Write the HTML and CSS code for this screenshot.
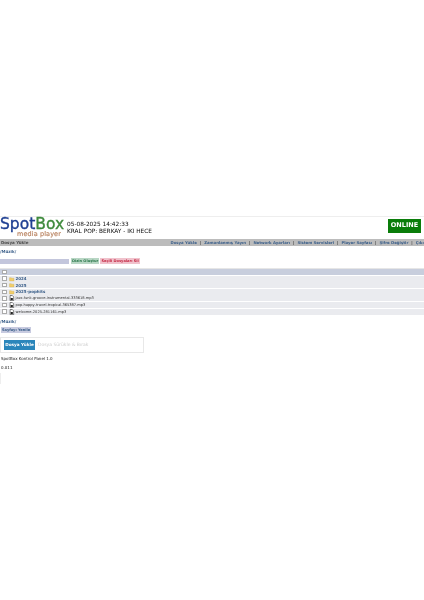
FILE: index.html
```html
<!DOCTYPE html>
<html lang="tr">
<head>
<meta charset="utf-8">
<title>SpotBox</title>
<link rel="stylesheet" href="styles.css">
</head>
<body>
<div class="page">
  <header class="head">
    <div class="logo">
      <div class="logo-main"><span class="spot">Spot</span><span class="box">Box</span></div>
      <div class="logo-sub">media player</div>
    </div>
    <div class="now">
      <div>05-08-2025 14:42:33</div>
      <div>KRAL POP: BERKAY - IKI HECE</div>
    </div>
    <div class="status">ONLINE</div>
  </header>
  <nav class="nav">
    <span class="nav-title">Dosya Yükle</span>
    <div class="nav-links">
      <a>Dosya Yükle</a><i>|</i><a>Zamanlanmış Yayın</a><i>|</i><a>Network Ayarları</a><i>|</i><a>Sistem Servisleri</a><i>|</i><a>Player Sayfası</a><i>|</i><a>Şifre Değiştir</a><i>|</i><a>Çıkış</a>
    </div>
  </nav>
  <div class="path first">/Müzik/</div>
  <div class="actions">
    <div class="search"></div>
    <button class="btn green">Dizin Oluştur</button>
    <button class="btn red">Seçili Dosyaları Sil</button>
  </div>
  <div class="list">
    <div class="row header"><span class="check"></span></div>
    <div class="row"><span class="check"></span><svg class="ico" viewBox="0 0 10 10"><path d="M1 2.5h3l1 1h4v5H1z" fill="#f2cf6b" stroke="#c9a648" stroke-width=".6"/></svg><b>2024</b></div>
    <div class="row"><span class="check"></span><svg class="ico" viewBox="0 0 10 10"><path d="M1 2.5h3l1 1h4v5H1z" fill="#f2cf6b" stroke="#c9a648" stroke-width=".6"/></svg><b>2025</b></div>
    <div class="row"><span class="check"></span><svg class="ico" viewBox="0 0 10 10"><path d="M1 2.5h3l1 1h4v5H1z" fill="#f2cf6b" stroke="#c9a648" stroke-width=".6"/></svg><b>2025-pophits</b></div>
    <div class="row"><span class="check"></span><svg class="ico" viewBox="0 0 10 10"><path d="M2 .5h4l2.5 2.5v7H2z" fill="#fff" stroke="#222"/><path d="M3 5h4v4H3z" fill="#222"/></svg><span>jazz-funk-groove-instrumental-333618.mp3</span></div>
    <div class="row"><span class="check"></span><svg class="ico" viewBox="0 0 10 10"><path d="M2 .5h4l2.5 2.5v7H2z" fill="#fff" stroke="#222"/><path d="M3 5h4v4H3z" fill="#222"/></svg><span>pop-happy-travel-tropical-365387.mp3</span></div>
    <div class="row"><span class="check"></span><svg class="ico" viewBox="0 0 10 10"><path d="M2 .5h4l2.5 2.5v7H2z" fill="#fff" stroke="#222"/><path d="M3 5h4v4H3z" fill="#222"/></svg><span>welcome-2025-281161.mp3</span></div>
  </div>
  <div class="path second">/Müzik/</div>
  <button class="btn reset">Sayfayı Yenile</button>
  <div class="upload">
    <button class="upload-btn">Dosya Yükle</button>
    <span class="upload-hint">Dosya Sürükle &amp; Bırak</span>
  </div>
  <div class="meta title">SpotBox Kontrol Panel 1.0</div>
  <div class="meta version">0.011</div>
  <div class="rule"></div>
</div>
</body>
</html>
```
FILE: styles.css
```css
html, body { margin: 0; padding: 0; background: #fff; overflow: hidden; }
.page { width: 424px; padding-top: 216px; font-family: "DejaVu Sans", Verdana, sans-serif; font-size: 4px; color: #333; overflow: hidden; will-change: transform; }
.head { display: flex; align-items: flex-start; height: 21px; border-top: 1px solid #eee; padding-bottom: 1px; }
.logo { width: 66px; flex: none; }
.logo-main { font-size: 15.5px; line-height: 14px; white-space: nowrap; -webkit-text-stroke: .35px; }
.spot { color: #1f3f92; }
.box { color: #3e8a3c; }
.logo-sub { font-size: 6.5px; line-height: 7px; letter-spacing: .1px; color: #b9825f; padding-left: 17px; white-space: nowrap; -webkit-text-stroke: .15px; }
.now { margin-left: 1px; padding-top: 4px; font-size: 5.8px; line-height: 6.5px; color: #111; white-space: nowrap; }
.status { margin-left: auto; margin-right: 3px; margin-top: 2px; width: 33px; height: 14px; background: #0a7d0a; color: #fff; font-weight: bold; font-size: 6.5px; line-height: 13px; text-align: center; }
.nav { display: flex; justify-content: space-between; height: 7px; line-height: 7px; background: #bcbcbc; white-space: nowrap; font-weight: bold; padding-left: 1px; }
.nav-title { color: #4c4c4c; }
.nav-links { display: flex; flex: none; gap: 3px; margin-right: -2px; color: #3b5f8a; font-size: 3.85px; }
.nav-links i { font-style: normal; color: #333; }
.path { font-size: 4px; font-weight: bold; color: #3b5f8a; line-height: 6px; }
.first { margin-top: 3px; }
.actions { display: flex; align-items: center; gap: 1px; margin-top: 3px; height: 6px; }
.search { width: 69px; height: 5px; margin-right: 1px; background: #c3c6dc; }
.btn { border: 0; padding: 0 1px; margin: 0; height: 6px; font: bold 3.6px/6px "DejaVu Sans", sans-serif; white-space: nowrap; }
.green { background: #b8d6c4; color: #2f7a4f; }
.red { background: #f0c2cc; color: #c52a45; }
.list { margin-top: 4px; border-top: 1px solid #e6e6e6; }
.row { display: flex; align-items: center; gap: 1px; height: 6px; margin-bottom: .6px; padding-left: 2px; background: #eaebef; color: #333; font-size: 3.6px; white-space: nowrap; }
.row.header { background: #c8cedd; }
.row b { color: #3b5f8a; font-size: 4px; }
.check { width: 4.5px; height: 4.5px; flex: none; background: #fff; border: .5px solid #aaa; box-sizing: border-box; margin-right: 1.5px; }
.ico { width: 5.5px; height: 6px; flex: none; }
.second { margin-top: 4px; }
.reset { display: block; margin-top: 2px; margin-left: 1px; background: #c8cbe0; color: #3b5f8a; }
.upload { display: flex; align-items: center; width: 142px; height: 14px; margin-top: 4px; border: 1px solid #e8e8e8; }
.upload-btn { margin-left: 3px; width: 31px; height: 10px; border: 0; padding: 0; background: #2a86bb; color: #fff; font: bold 4.2px/10px "DejaVu Sans", sans-serif; white-space: nowrap; }
.upload-hint { margin-left: 3px; color: #cfcfcf; font-size: 4.5px; white-space: nowrap; }
.meta { font-size: 4px; line-height: 6px; color: #222; padding-left: 1px; }
.title { margin-top: 3px; }
.version { margin-top: 3px; }
.rule { width: 1px; height: 11px; margin-top: 2px; background: #eee; }
```
